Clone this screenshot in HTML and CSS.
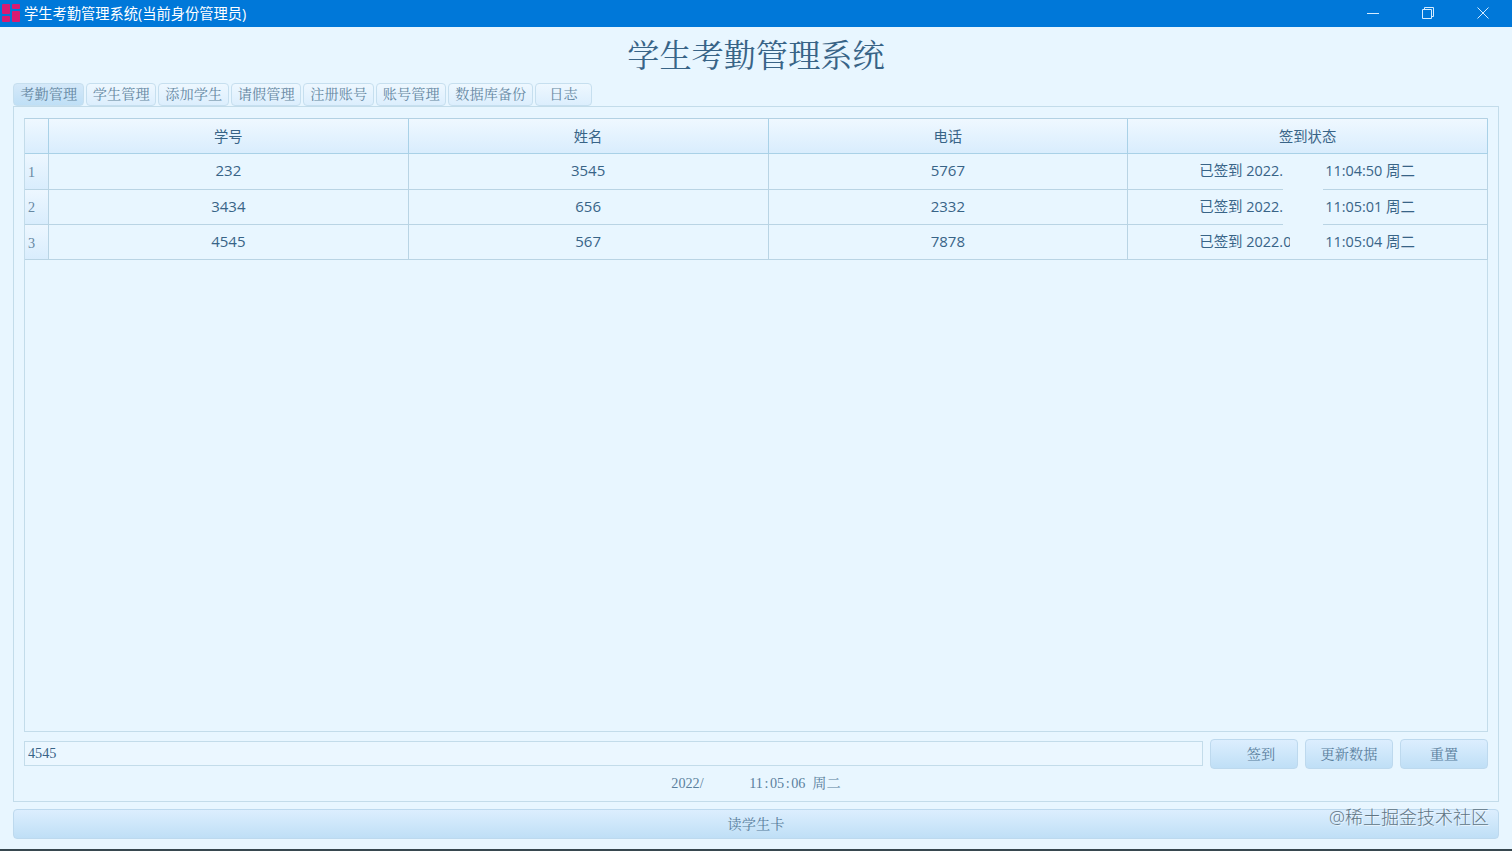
FILE: index.html
```html
<!DOCTYPE html>
<html lang="zh-CN">
<head>
    <meta charset="UTF-8">
    <title>学生考勤管理系统</title>
    <link rel="stylesheet" href="styles.css">
</head>
<body>
    <div class="titlebar">
        <svg class="app-icon" width="18" height="18" viewBox="0 0 18 18">
            <path fill="#d81b72" d="M1 0h6q1 0 1 1v8q0 1-1 1H1q-1 0-1-1V1q0-1 1-1zM11 0h6q1 0 1 1v3q0 1-1 1h-6q-1 0-1-1V1q0-1 1-1zM1 12h6q1 0 1 1v4q0 1-1 1H1q-1 0-1-1v-4q0-1 1-1zM11 7h6q1 0 1 1v9q0 1-1 1h-6q-1 0-1-1V8q0-1 1-1z"/>
        </svg>
        <span class="window-title">学生考勤管理系统(当前身份管理员)</span>
        <div class="window-buttons">
            <svg width="14" height="14" viewBox="0 0 14 14"><path d="M1 7.5h12"/></svg>
            <svg width="14" height="14" viewBox="0 0 14 14"><path d="M1.500 3.500h9v9h-9zM3.500 3.500v-2h9v9h-2"/></svg>
            <svg width="14" height="14" viewBox="0 0 14 14"><path d="M1.500 1.500l11 11M12.500 1.500l-11 11"/></svg>
        </div>
    </div>

    <div class="main">
        <h1>学生考勤管理系统</h1>

        <div class="tabs">
            <div class="tab active">考勤管理</div>
            <div class="tab">学生管理</div>
            <div class="tab">添加学生</div>
            <div class="tab">请假管理</div>
            <div class="tab">注册账号</div>
            <div class="tab">账号管理</div>
            <div class="tab wide">数据库备份</div>
            <div class="tab short">日志</div>
        </div>

        <div class="panel">
            <div class="table-view">
                <div class="row head">
                    <div class="cell"></div>
                    <div class="cell">学号</div>
                    <div class="cell">姓名</div>
                    <div class="cell">电话</div>
                    <div class="cell">签到状态</div>
                </div>
                <div class="row">
                    <div class="cell index">1</div>
                    <div class="cell">232</div>
                    <div class="cell">3545</div>
                    <div class="cell">5767</div>
                    <div class="cell status"><span class="day">已签到 2022.</span><span class="mask"></span><span>11:04:50 周二</span></div>
                </div>
                <div class="row">
                    <div class="cell index">2</div>
                    <div class="cell">3434</div>
                    <div class="cell">656</div>
                    <div class="cell">2332</div>
                    <div class="cell status"><span class="day">已签到 2022.</span><span class="mask"></span><span>11:05:01 周二</span></div>
                </div>
                <div class="row">
                    <div class="cell index">3</div>
                    <div class="cell">4545</div>
                    <div class="cell">567</div>
                    <div class="cell">7878</div>
                    <div class="cell status"><span class="day cut">已签到 2022.0</span><span>11:05:04 周二</span></div>
                </div>
            </div>

            <div class="form">
                <input class="card-input" type="text" value="4545">
                <button class="btn sign">签到</button>
                <button class="btn">更新数据</button>
                <button class="btn">重置</button>
            </div>

            <div class="clock">
                <span class="date">2022/</span>
                <span class="time">11<i>:</i>05<i>:</i>06</span>
                <span>周二</span>
            </div>
        </div>

        <button class="btn read-card">读学生卡</button>
    </div>

    <div class="watermark">@稀土掘金技术社区</div>
</body>
</html>
```
FILE: styles.css
```css
:root {
    --bg: #e8f6ff;
    --text: #386487;
    --text-soft: #6688a3;
    --line: #c3dcea;
    --song: "Liberation Serif", "Noto Serif CJK SC", "Noto Sans CJK SC", serif;
    --hei: "Open Sans", "Noto Sans CJK SC", sans-serif;
}

* {
    box-sizing: border-box;
}

body {
    margin: 0;
    height: 851px;
    display: flex;
    flex-direction: column;
    overflow: hidden;
    background: var(--bg);
    color: var(--text);
    font-family: var(--song);
    font-size: 14.2px;
    border-bottom: 2px solid #37474f;
}

.titlebar {
    height: 27px;
    flex: none;
    display: flex;
    align-items: center;
    padding: 0 22px 1px 2px;
    background: #0078d9;
    color: #fff;
    font-family: var(--hei);
}

.window-title {
    margin-left: 4px;
    padding-top: 2px;
    font-size: 14.25px;
    line-height: 20px;
    white-space: nowrap;
}

.window-buttons {
    display: flex;
    gap: 41px;
    margin-left: auto;
}

.window-buttons svg {
    fill: none;
    stroke: #d5ecff;
}

.main {
    flex: 1;
    display: flex;
    flex-direction: column;
    padding: 0 13px 11px;
}

h1 {
    height: 56px;
    margin: 0;
    font-size: 32.2px;
    font-weight: 400;
    line-height: 58px;
    text-align: center;
}

.tabs {
    display: flex;
    gap: 2px;
    height: 23px;
}

.tab {
    width: 70.5px;
    height: 23px;
    padding-left: 1px;
    border: 1px solid #c6dfef;
    border-radius: 4px;
    background: linear-gradient(#eef8ff, #dceefd);
    color: var(--text-soft);
    font-weight: 400;
    line-height: 21px;
    text-align: center;
    white-space: nowrap;
}

.tab.active {
    background: linear-gradient(#d5e9f9, #bfdff6);
}

.tab.wide {
    width: 84.5px;
}

.tab.short {
    width: 57px;
}

.panel {
    height: 696px;
    display: flex;
    flex-direction: column;
    padding: 11px 10px 10px;
    border: 1px solid var(--line);
}

.table-view {
    height: 614px;
    flex: none;
    border: 1px solid var(--line);
    border-top-color: #b3d1e3;
}

.row {
    display: grid;
    grid-template-columns: 24px repeat(4, 1fr);
    grid-template-rows: 35.3px;
    margin-right: -1px;
}

.cell {
    display: flex;
    align-items: center;
    justify-content: center;
    min-height: 0;
    padding-bottom: 2px;
    border-right: 1px solid #b9d4e4;
    border-bottom: 1px solid #b9d4e4;
    font-family: var(--hei);
    font-size: 15px;
    line-height: 20px;
}

.head .cell {
    padding: 1px 0 0;
    background: linear-gradient(#eff8ff, #d9edfd);
    border-color: #a9d1e7;
    font-size: 14.3px;
}

.cell.index {
    justify-content: flex-start;
    padding: 1px 0 0 3px;
    background: linear-gradient(#edf7ff, #d9edfd);
    color: var(--text-soft);
    font-family: var(--song);
    font-size: 14.2px;
}

.cell.status {
    justify-content: flex-start;
    padding: 0 0 0 71px;
    font-size: 14.45px;
    white-space: nowrap;
}

.day {
    width: 84px;
}

/* the date is blanked out, together with a bit of the grid line */
.mask {
    width: 40px;
    height: 36px;
    margin: 0 2px -3px 0;
    flex: none;
    align-self: flex-start;
    background: var(--bg);
}

.day.cut {
    width: 91px;
    margin-right: 35px;
    overflow: hidden;
}

.form {
    display: flex;
    align-items: center;
    gap: 7px;
    margin-top: 7px;
}

.card-input {
    flex: 1;
    height: 25px;
    margin-bottom: 1px;
    padding: 0 3px;
    border: 1px solid var(--line);
    background: #ebf7ff;
    color: var(--text);
    font: 14.2px var(--song);
}

.btn {
    width: 88px;
    height: 30px;
    padding: 0 0 2px;
    border: 1px solid #bdd9ee;
    border-radius: 4px;
    background: linear-gradient(#dceefe, #bfdff6);
    color: #5a7f9d;
    font: 400 14.2px var(--song);
}

.btn.sign {
    padding-left: 14px;
}

.clock {
    display: flex;
    justify-content: center;
    align-items: baseline;
    height: 28px;
    line-height: 28px;
    color: #5a7f9d;
}

.date {
    width: 78px;
}

.time {
    margin-right: 7px;
}

.time i {
    display: inline-block;
    width: 7px;
    font-style: normal;
    text-align: center;
}

.btn.read-card {
    width: 100%;
    margin-top: 7px;
}

.watermark {
    position: absolute;
    right: 23px;
    bottom: 21px;
    color: #5f7484;
    font: 300 18px/26px var(--hei);
    text-shadow: 1px 1px 0 rgba(255, 255, 255, .6);
}
```
